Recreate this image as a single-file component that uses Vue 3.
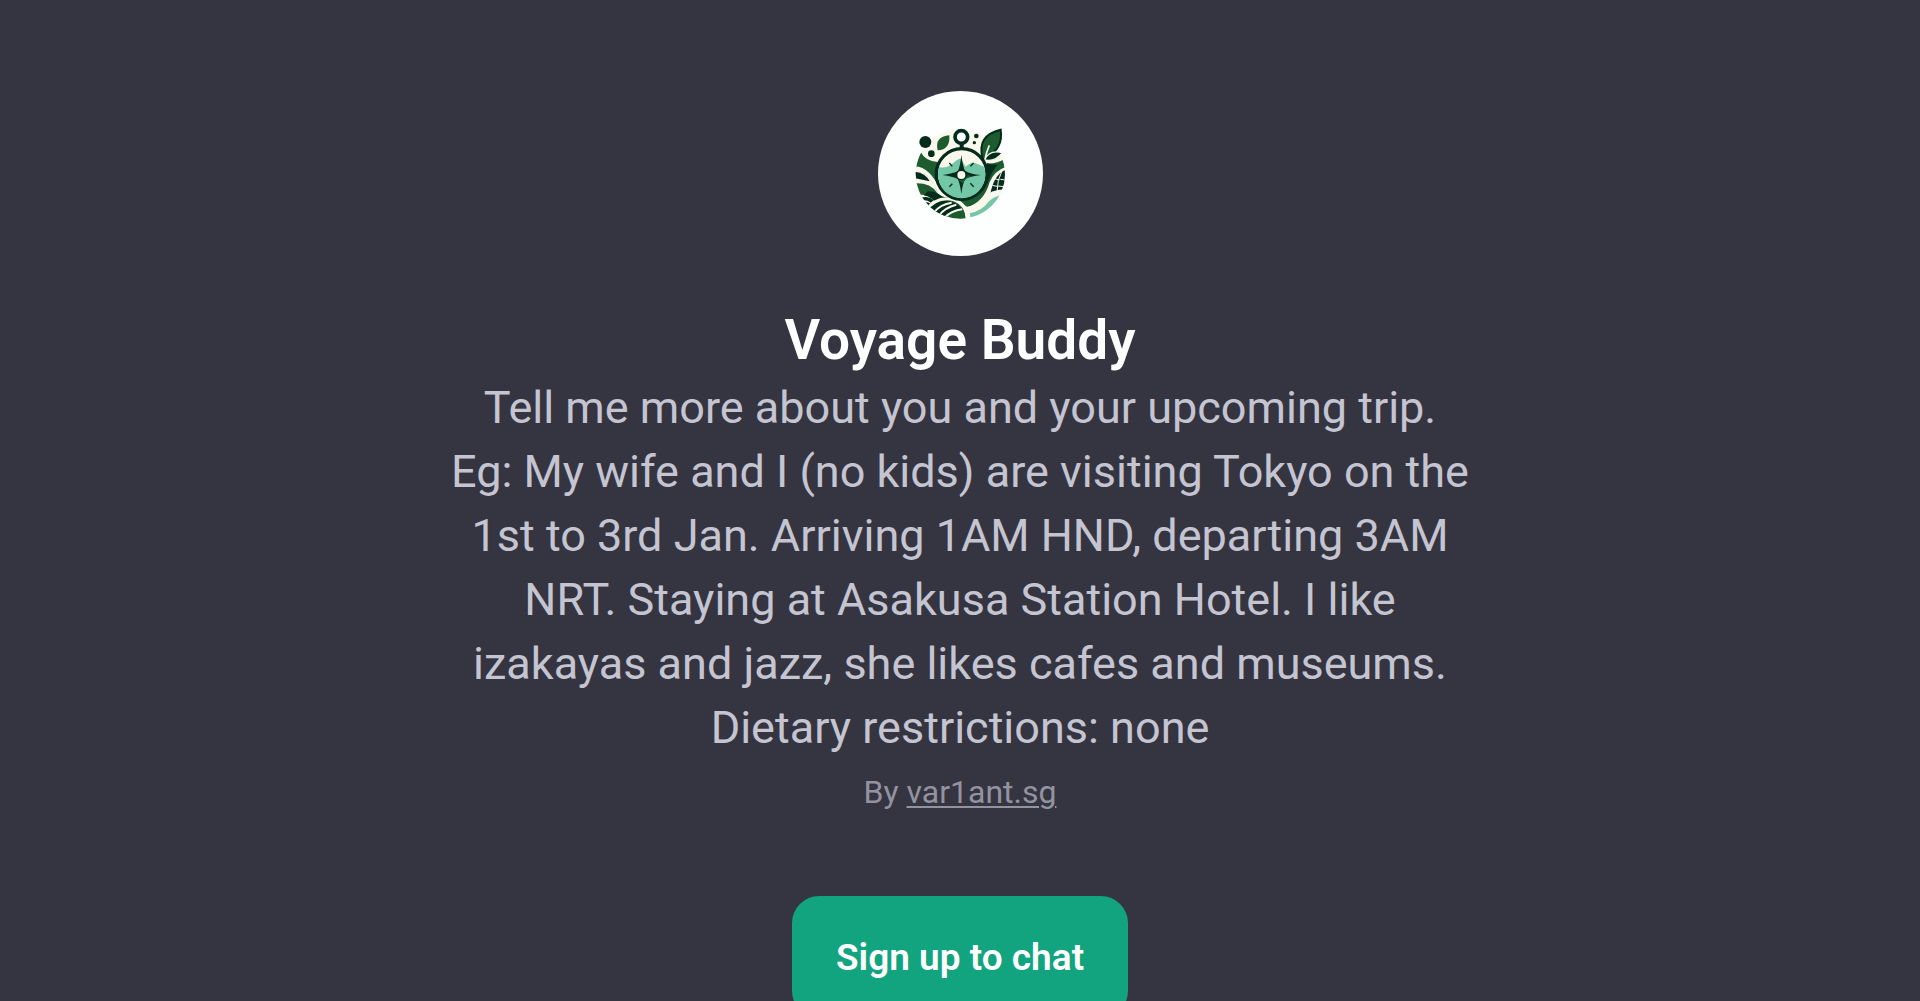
<script setup>
const profile = {
  name: 'Voyage Buddy',
  description: [
    'Tell me more about you and your upcoming trip.',
    'Eg: My wife and I (no kids) are visiting Tokyo on the',
    '1st to 3rd Jan. Arriving 1AM HND, departing 3AM',
    'NRT. Staying at Asakusa Station Hotel. I like',
    'izakayas and jazz, she likes cafes and museums.',
    'Dietary restrictions: none',
  ].join('\n'),
  author: 'var1ant.sg',
}
</script>

<template>
  <main class="page">
    <svg class="avatar" viewBox="23 33 495 495" role="img" aria-label="Voyage Buddy logo">
      <defs>
        <clipPath id="badge"><circle cx="270" cy="282" r="134" /></clipPath>
        <clipPath id="dial"><circle cx="274" cy="284" r="71" /></clipPath>
      </defs>
      <circle cx="270.500" cy="280.500" r="247.500" fill="#fdfefe" />
      <circle cx="270" cy="282" r="134" fill="#faf7ec" />

      <g clip-path="url(#badge)">
        <!-- hills and terraces -->
        <path d="M136 262 L150 214 Q164 244 202 246 L202 338 Q186 288 136 260Z" fill="#1c5c2e" />
        <path d="M134 264 Q176 266 206 334" stroke="#faf7ec" stroke-width="10" fill="none" />
        <path d="M134 275 Q166 279 178 304 L134 295Z" fill="#042c1c" />
        <path d="M134 310 Q180 308 200 338 Q212 352 236 352 L202 364 Q176 340 146 345Z" fill="#1c5c2e" />
        <path d="M172 334 Q196 334 216 350 Q230 356 250 352 L200 378 Q188 350 160 346Z" fill="#042c1c" />
        <path d="M150 354 Q174 346 190 360 L182 368 Q168 358 154 362Z" fill="#042c1c" />
        <path d="M160 370 Q172 362 181 372 L174 381Z" fill="#042c1c" />
        <path d="M350 250 Q378 252 404 236 L404 262 Q374 272 358 306 Q342 364 292 382 Q268 364 236 354 L292 356 Q344 336 350 250Z" fill="#1c5c2e" />
        <path d="M350 250 Q372 256 382 254 Q360 280 354 304 Q342 342 292 354 L238 354 L266 366 Q344 344 352 302Z" fill="#042c1c" />
        <path d="M404 270 L404 326 L360 342 Q370 286 404 270Z" fill="#042c1c" />
        <path d="M372 296 L388 300 M366 316 L384 320 M390 298 L404 300 M384 318 L402 320 M396 270 Q380 300 380 336" stroke="#faf7ec" stroke-width="3" fill="none" />
        <path d="M172 386 Q212 344 258 366 Q286 380 286 420 L230 420Z" fill="#1c5c2e" />
        <path d="M172 386 Q212 350 254 370 Q270 378 278 394 Q246 380 222 414Z" fill="#042c1c" />
        <path d="M188 400 Q210 372 244 368 M204 408 Q224 382 258 374 M222 414 Q242 392 276 388" stroke="#faf7ec" stroke-width="6" fill="none" />
        <path d="M164 394 Q200 344 254 360 Q292 376 292 420" stroke="#faf7ec" stroke-width="9" fill="none" />
        <path d="M284 388 Q326 380 346 356 Q362 336 404 334" stroke="#faf7ec" stroke-width="12" fill="none" />
        <path d="M298 400 Q336 392 354 366 Q368 350 396 344 L392 380 L302 420Z" fill="#73c7a7" />
      </g>

      <!-- seeds and leaves -->
      <circle cx="165" cy="186" r="18" fill="#042c1c" />
      <circle cx="183" cy="221" r="10" fill="#042c1c" />
      <circle cx="318" cy="168" r="7" fill="#042c1c" />
      <circle cx="312" cy="188" r="5" fill="#042c1c" />
      <path d="M202 211 Q192 170 237 166 Q240 210 202 211Z" fill="#1c5c2e" />
      <path d="M337 236 Q318 166 391 149 Q400 204 346 236Z" fill="#1c5c2e" stroke="#042c1c" stroke-width="6" />
      <path d="M344 238 Q348 216 357 196" stroke="#faf7ec" stroke-width="5" fill="none" />
      <path d="M343 240 Q356 208 396 218 Q376 246 343 240Z" fill="#042c1c" stroke="#faf7ec" stroke-width="4" />

      <!-- compass -->
      <circle cx="273" cy="171" r="19" fill="#fdfefe" stroke="#042c1c" stroke-width="11" />
      <path d="M268 191 H280 V210 H268Z" fill="#042c1c" />
      <circle cx="274" cy="282" r="76" fill="#faf7ec" stroke="#042c1c" stroke-width="10" />
      <g clip-path="url(#dial)">
        <path d="M198 260 Q230 268 248 250 Q260 236 272 236 L286 260 Q304 244 316 250 L350 264 V360 H198Z" fill="#73c7a7" />
      </g>
      <path d="M273 224 Q277 258 284 272 Q298 282 332 285 Q298 289 285 297 Q277 310 273 342 Q269 310 262 297 Q248 289 216 285 Q248 281 263 272 Q270 258 273 224Z" fill="#042c1c" />
      <path d="M262 299 Q284 304 292 286 L304 288 Q284 294 278 310Z" fill="#1c5c2e" />
      <circle cx="273" cy="285" r="12" fill="#faf7ec" />
      <path d="M237 249 L246 259 M310 249 L300 259 M237 320 L246 311 M310 320 L300 310" stroke="#042c1c" stroke-width="4" />
    </svg>

    <h1 class="name">{{ profile.name }}</h1>
    <p class="description">{{ profile.description }}</p>
    <p class="author">By <a href="#">{{ profile.author }}</a></p>
    <button class="signup" type="button">Sign up to chat</button>
  </main>
</template>

<style>
body {
  margin: 0;
  background: #353541;
}
</style>

<style scoped>
.page {
  box-sizing: border-box;
  display: flex;
  flex-direction: column;
  align-items: center;
  height: 100vh;
  padding: 91px 24px 0;
  overflow: hidden;
  background: #353541;
  font-family: Roboto, "Liberation Sans", sans-serif;
  text-align: center;
}
.avatar {
  flex: none;
  width: 165px;
  height: 165px;
}
.name {
  margin: 52px 0 0;
  color: #fdfefe;
  font-size: 55px;
  font-weight: 600;
  line-height: 64px;
}
.description {
  margin: 4px 0 0;
  color: #c5c5d2;
  font-size: 45px;
  line-height: 64px;
  white-space: pre-line;
}
.author {
  margin: 8px 0 0;
  color: #9393a0;
  font-size: 32px;
  line-height: 48px;
}
.author a {
  color: inherit;
  text-decoration: underline;
  text-decoration-thickness: 2px;
  text-underline-offset: 3px;
}
.signup {
  flex: none;
  margin-top: 80px;
  padding: 38px 44px 36px;
  border: 0;
  border-radius: 27px;
  background: #12a37f;
  color: #ffffff;
  font-family: inherit;
  font-size: 37px;
  font-weight: 600;
  line-height: 48px;
  cursor: pointer;
}
</style>
